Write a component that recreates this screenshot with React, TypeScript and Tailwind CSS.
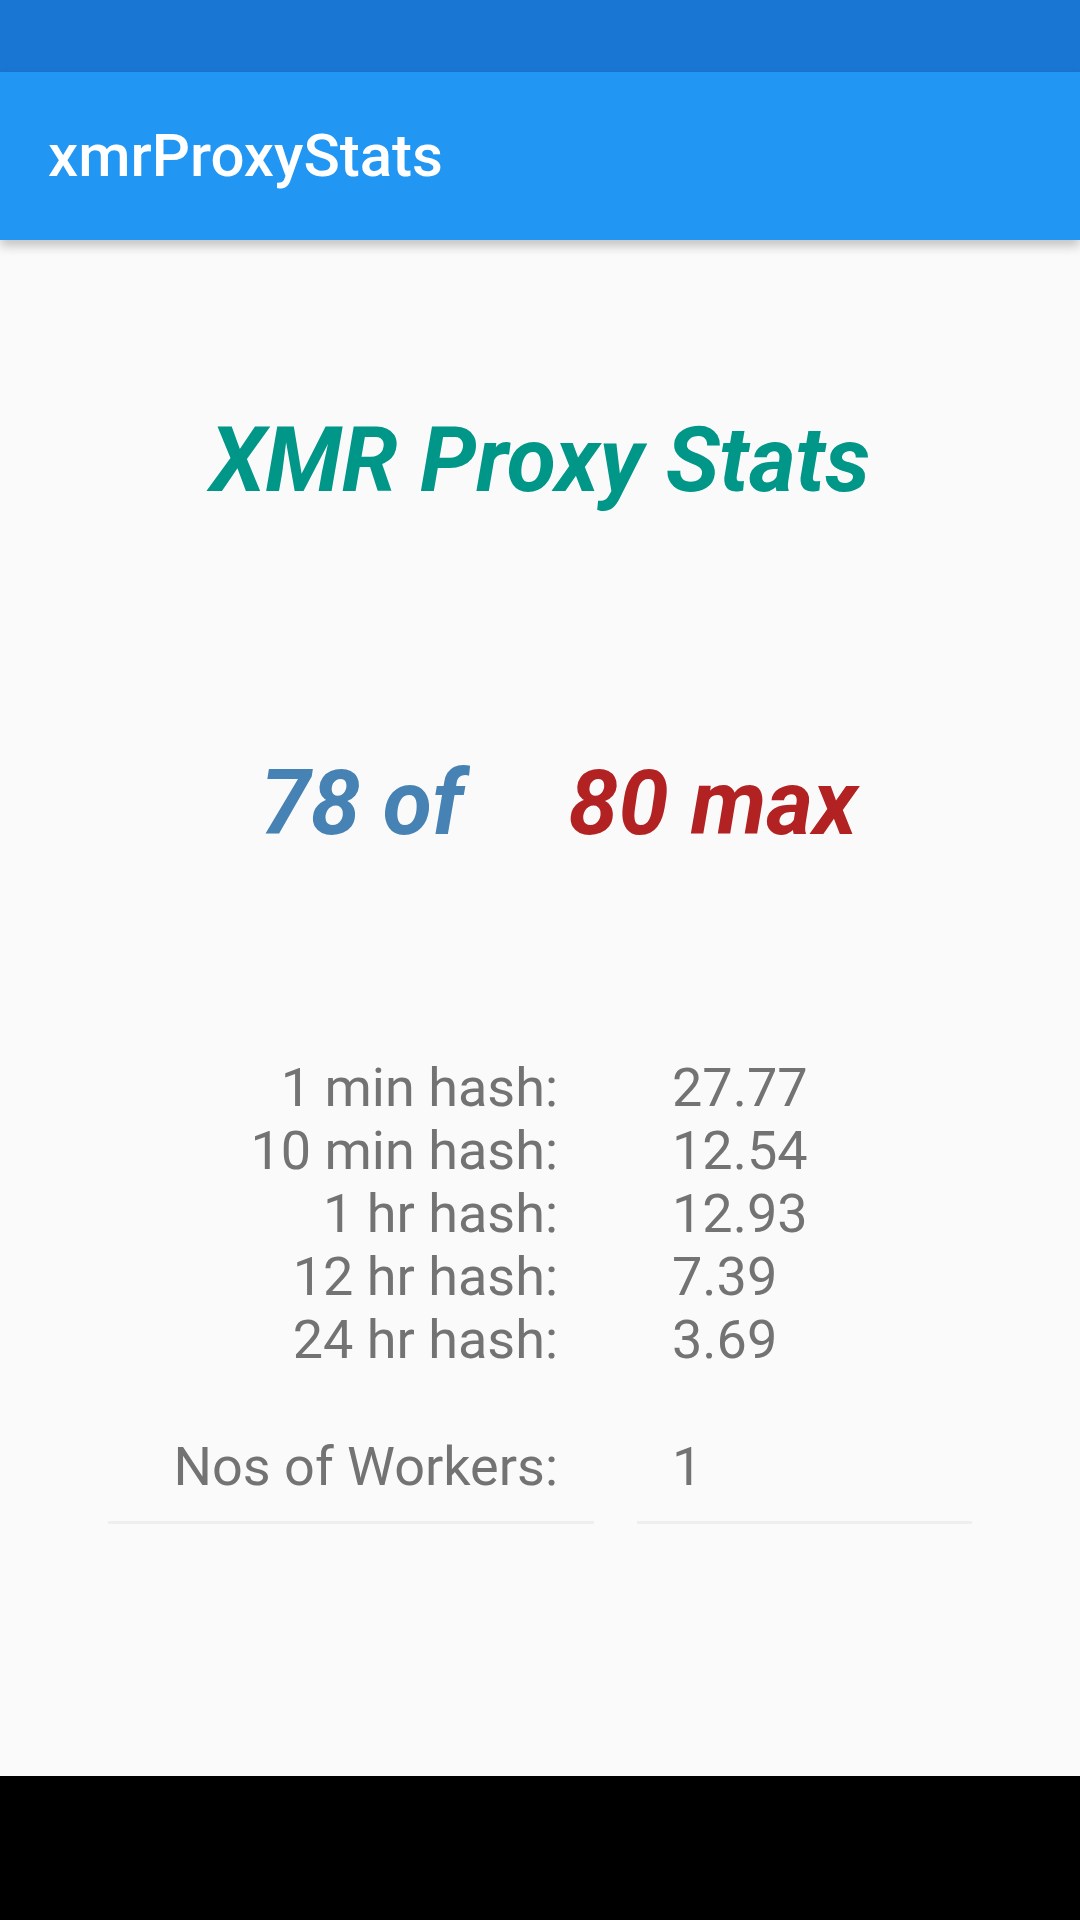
const hashRows = [
  { label: '1 min hash:', value: '27.77' },
  { label: '10 min hash:', value: '12.54' },
  { label: '1 hr hash:', value: '12.93' },
  { label: '12 hr hash:', value: '7.39' },
  { label: '24 hr hash:', value: '3.69' },
];

const font = { fontFamily: 'Roboto, "Noto Sans", sans-serif' };

export default function App() {
  return (
    <div className="flex h-[1920px] w-[1080px] flex-col bg-[#fafafa]" style={font}>
      {/* status bar */}
      <div className="h-[72px] w-full shrink-0 bg-[#1976d2]" />

      {/* app bar */}
      <div className="relative z-10 flex h-[168px] shrink-0 items-center bg-[#2196f3] pl-[48px] shadow-[0_6px_10px_rgba(0,0,0,0.22)]">
        <h1 className="text-[60px] font-medium leading-none text-white">xmrProxyStats</h1>
      </div>

      <main className="flex flex-1 flex-col items-center">
        <h2 className="mt-[168px] text-[90px] font-bold italic leading-[105px] text-[#009688]">XMR Proxy Stats</h2>

        <div className="mt-[238px] flex w-full justify-center gap-[105px] pl-[38px] text-[90px] font-bold italic leading-[105px]">
          <span className="text-[#4682b4]">78 of</span>
          <span className="text-[#b22222]">80 max</span>
        </div>

        <div className="mt-[200px] w-full px-[108px] text-[54px] leading-[63px] text-[#737373]">
          {hashRows.map((r) => (
            <div key={r.label} className="flex gap-[43px]">
              <div className="w-[486px] pr-[36px] text-right">{r.label}</div>
              <div className="w-[335px] pl-[35px]">{r.value}</div>
            </div>
          ))}

          <div className="mt-[64px] flex gap-[43px]">
            <div className="w-[486px] border-b-[3px] border-[#eeeeee] pb-[23px] pr-[36px] text-right">Nos of Workers:</div>
            <div className="w-[335px] border-b-[3px] border-[#eeeeee] pb-[23px] pl-[35px]">1</div>
          </div>
        </div>
      </main>

      {/* nav bar */}
      <div className="h-[144px] w-full shrink-0 bg-black" />
    </div>
  );
}
